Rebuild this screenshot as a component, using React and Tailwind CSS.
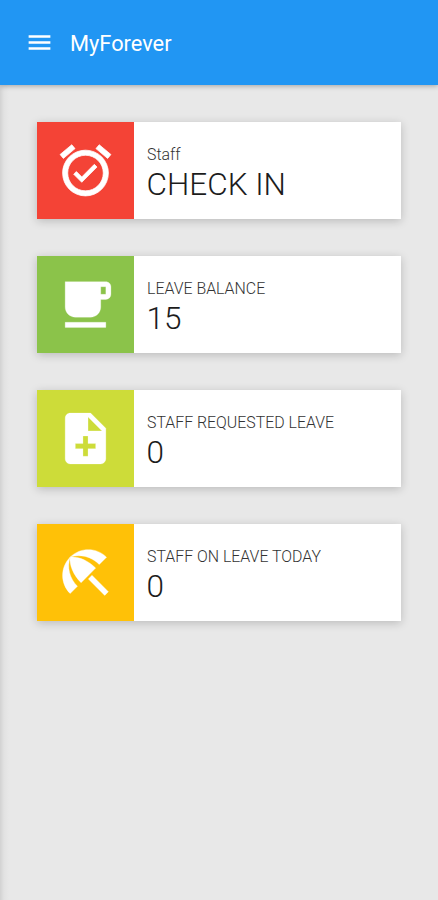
import React from "react";
import {
  MdAlarmOn,
  MdFreeBreakfast,
  MdNoteAdd,
  MdBeachAccess,
  MdMenu,
} from "react-icons/md";

const cards = [
  {
    label: "Staff",
    value: "CHECK IN",
    icon: MdAlarmOn,
    stroke: 0.3,
    color: "bg-[#f44336]",
  },
  {
    label: "LEAVE BALANCE",
    value: "15",
    icon: MdFreeBreakfast,
    stroke: 0.1,
    color: "bg-[#8bc34a]",
  },
  {
    label: "STAFF REQUESTED LEAVE",
    value: "0",
    icon: MdNoteAdd,
    stroke: 0.1,
    color: "bg-[#cddc39]",
  },
  {
    label: "STAFF ON LEAVE TODAY",
    value: "0",
    icon: MdBeachAccess,
    stroke: 0.15,
    color: "bg-[#ffc107]",
  },
];

export default function App() {
  return (
    <div className="flex h-screen flex-col bg-[#e8e8e8] bg-[linear-gradient(to_right,#d2d2d2_0px,#e2e2e2_4px,#e8e8e8_9px)] font-['Roboto',sans-serif]">
      <header className="flex h-[85px] items-center bg-[#2196f3] pl-[25px] text-white shadow-[0_1px_5px_rgba(0,0,0,0.3)]">
        <button className="mr-[16px]">
          <MdMenu size={29} />
        </button>
        <h1 className="pt-[2px] text-[21.8px] leading-7">MyForever</h1>
      </header>

      <main className="flex flex-col gap-[37px] px-[37px] pt-[37px]">
        {cards.map((card) => (
          <InfoBox key={card.label} {...card} />
        ))}
      </main>
    </div>
  );
}

function InfoBox({ label, value, icon: Icon, stroke, color }) {
  return (
    <div className="flex h-[97px] bg-white shadow-[0_2px_9px_rgba(0,0,0,0.2)]">
      <div
        className={`flex w-[97px] items-center justify-center text-white ${color}`}
      >
        {/* the icons carry an empty 24x24 frame path, keep it unstroked */}
        <Icon
          size={61}
          strokeWidth={stroke}
          className="[&>path[fill=none]]:stroke-none"
        />
      </div>
      <div className="pl-[13px] pt-[22px]">
        <div className="text-[15.9px] font-light leading-[22px] text-[#333]">
          {label}
        </div>
        <div className="-ml-[0.5px] text-[31.5px] font-light leading-[37px] text-[#1c1c1c]">
          {value}
        </div>
      </div>
    </div>
  );
}
